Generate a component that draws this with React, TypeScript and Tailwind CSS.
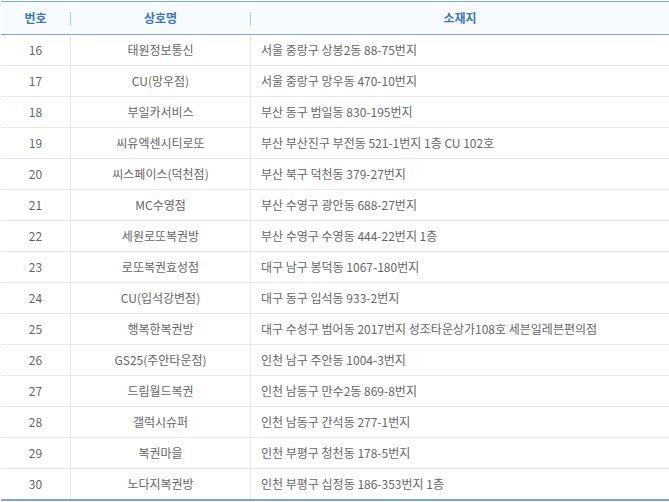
const rows: [string, string, string][] = [
  ['16', '태원정보통신', '서울 중랑구 상봉2동 88-75번지'],
  ['17', 'CU(망우점)', '서울 중랑구 망우동 470-10번지'],
  ['18', '부일카서비스', '부산 동구 범일동 830-195번지'],
  ['19', '씨유엑센시티로또', '부산 부산진구 부전동 521-1번지 1층 CU 102호'],
  ['20', '씨스페이스(덕천점)', '부산 북구 덕천동 379-27번지'],
  ['21', 'MC수영점', '부산 수영구 광안동 688-27번지'],
  ['22', '세원로또복권방', '부산 수영구 수영동 444-22번지 1층'],
  ['23', '로또복권효성점', '대구 남구 봉덕동 1067-180번지'],
  ['24', 'CU(입석강변점)', '대구 동구 입석동 933-2번지'],
  ['25', '행복한복권방', '대구 수성구 범어동 2017번지 성조타운상가108호 세븐일레븐편의점'],
  ['26', 'GS25(주안타운점)', '인천 남구 주안동 1004-3번지'],
  ['27', '드림월드복권', '인천 남동구 만수2동 869-8번지'],
  ['28', '갤럭시슈퍼', '인천 남동구 간석동 277-1번지'],
  ['29', '복권마을', '인천 부평구 청천동 178-5번지'],
  ['30', '노다지복권방', '인천 부평구 십정동 186-353번지 1층'],
]

export default function App() {
  return (
    <div className="h-[502px] w-[669px] bg-white pl-px pt-px font-['Noto_Sans_CJK_KR','Noto_Sans',sans-serif] text-[12px]">
      <div className="flex h-[34px] items-center border-y border-[#7fa9d8] bg-[#f7fbfe] font-bold text-[#3a76b8]">
        <div className="w-[69px] text-center">번호</div>
        <div className="h-[13px] w-px bg-[#a9cbea]" />
        <div className="w-[179px] text-center">상호명</div>
        <div className="h-[13px] w-px bg-[#a9cbea]" />
        <div className="flex-1 text-center">소재지</div>
      </div>
      <div className="border-b-2 border-[#74a8dc]">
        {rows.map(([no, name, addr], i) => (
          <div
            key={no}
            className={`flex items-stretch text-[#666666] ${i < rows.length - 1 ? 'h-[31px] border-b border-[#e8e8e8]' : 'h-[30px]'}`}
          >
            <div className="flex w-[69px] items-center justify-center">{no}</div>
            <div className="w-px bg-[#e8e8e8]" />
            <div className="flex w-[179px] items-center justify-center">{name}</div>
            <div className="w-px bg-[#e8e8e8]" />
            <div className="flex flex-1 items-center pl-[10px]">{addr}</div>
          </div>
        ))}
      </div>
    </div>
  )
}
